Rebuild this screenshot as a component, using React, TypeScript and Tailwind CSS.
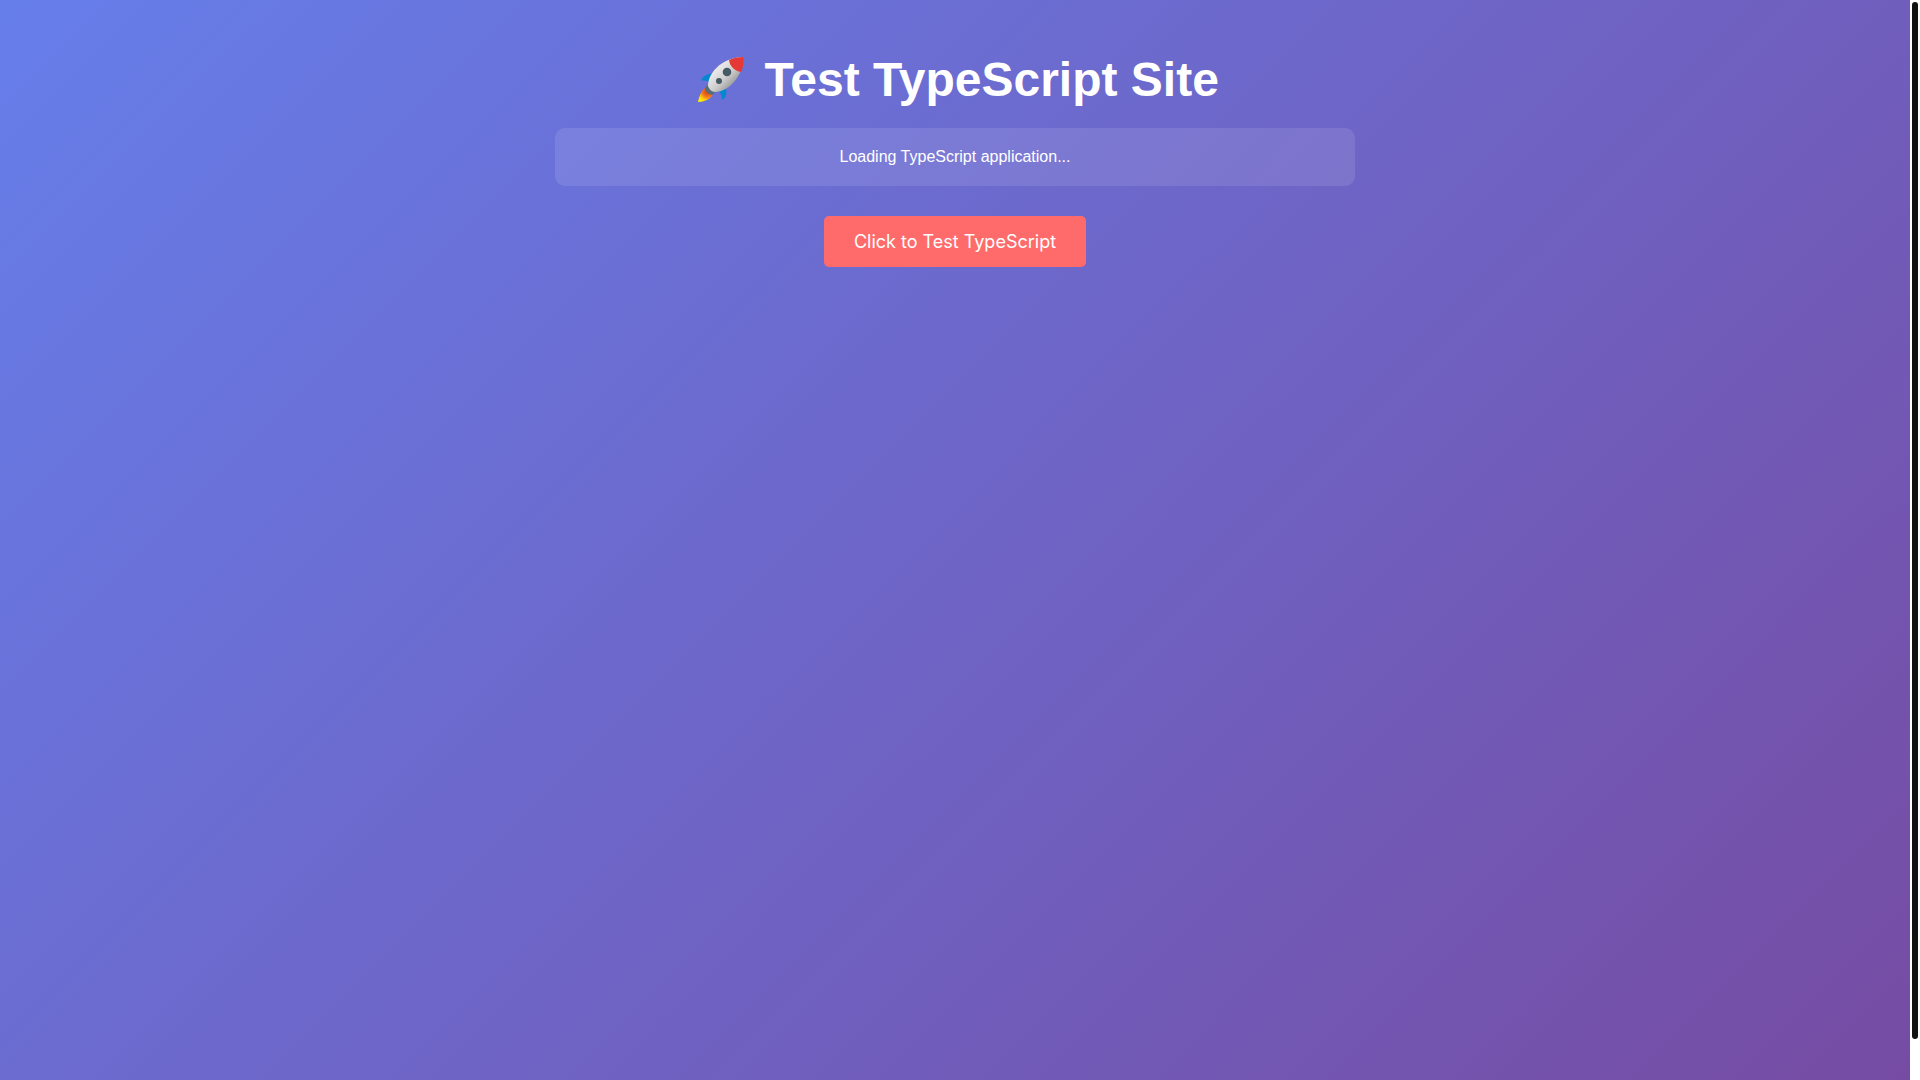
function Rocket() {
  return (
    <svg viewBox="-2 0 60 52" className="inline-block h-[52px] w-[60px] align-text-bottom" role="img" aria-label="Rocket">
      <defs>
        <linearGradient id="hull" x1="20" y1="14" x2="38" y2="32" gradientUnits="userSpaceOnUse">
          <stop offset="0.2" stopColor="#e6e6e6" />
          <stop offset="0.6" stopColor="#cfcfcf" />
          <stop offset="1" stopColor="#9e9e9e" />
        </linearGradient>
        <radialGradient id="flame" cx="15" cy="37" r="12" gradientUnits="userSpaceOnUse">
          <stop offset="0.1" stopColor="#d84315" />
          <stop offset="0.5" stopColor="#f4791f" />
          <stop offset="0.75" stopColor="#fdc70c" />
          <stop offset="1" stopColor="#fff200" />
        </radialGradient>
      </defs>
      <path d="M21 20C14 19 10 22 8 27C12 26 15 27 18 29Z" fill="#0288d1" />
      <path d="M32 33C35 39 33 44 29 46C29 42 28 39 25 37Z" fill="#0288d1" />
      <path d="M12 34C8 37 6 43 5 48C11 48 18 45 20 40Z" fill="url(#flame)" />
      <path d="M14 31L22 39L19 41C15 40 12 37 12 34Z" fill="#546e7a" />
      <path d="M15 32C15 20 27 4 50 3C51 21 36 38 22 38C19 38 16 35 15 32Z" fill="url(#hull)" />
      <path d="M36 6C40 4 45 3 50 3C51 8 50 14 48 18C42 17 37 13 36 6Z" fill="#e53935" />
      <circle cx="34" cy="18" r="4.3" fill="#455a64" />
      <circle cx="26" cy="27" r="3" fill="#455a64" />
    </svg>
  );
}

export default function App() {
  return (
    <div className="flex h-screen overflow-hidden bg-white">
      <main className="min-h-[calc(100vh+40px)] min-w-0 flex-1 self-start bg-[linear-gradient(135deg,#667eea_0%,#764ba2_100%)] px-5 pt-[50px] text-center font-['Liberation_Sans',Arial,sans-serif] text-base text-white">
        <div className="mx-auto max-w-[800px]">
          <h1 className="mb-[18px] text-5xl leading-[60px] font-bold">
            <Rocket /> Test TypeScript Site
          </h1>
          <p className="rounded-[10px] bg-white/10 p-5 leading-[18px]">Loading TypeScript application...</p>
          <button type="button" className="mt-[30px] rounded-[5px] bg-[#ff6b6b] px-[30px] py-[15px] font-['Inter',sans-serif] text-lg leading-[21px]">
            Click to Test TypeScript
          </button>
        </div>
      </main>
      <div className="w-2.5 py-0.5 pl-0.5" aria-hidden="true">
        <div className="h-[96.4%] w-1.5 rounded-full bg-[#111111]" />
      </div>
    </div>
  );
}
